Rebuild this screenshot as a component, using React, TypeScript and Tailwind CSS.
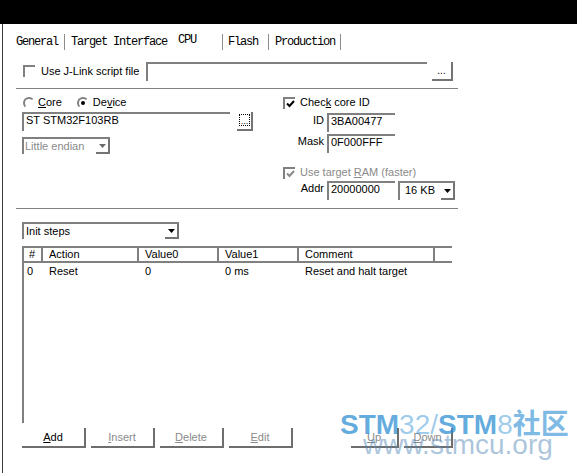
import type { ReactNode } from "react";

// Windows-style classic controls, drawn with plain borders
function CheckBox({ checked, disabled }: { checked?: boolean; disabled?: boolean }) {
  return (
    <span className="w-[12px] h-[12px] shrink-0 border-t-2 border-l-2 border-[#808080] flex items-center justify-center">
      {checked && (
        <svg width="9" height="8" viewBox="0 0 9 8">
          <path
            d="M1 3.5 L3.5 6 L8 1"
            fill="none"
            stroke={disabled ? "#8a8a8a" : "#000"}
            strokeWidth="2"
          />
        </svg>
      )}
    </span>
  );
}

function Radio({ on }: { on?: boolean }) {
  return (
    <span className="w-[12px] h-[12px] shrink-0 rounded-full border-2 border-transparent border-t-[#808080] border-l-[#808080] flex items-center justify-center">
      {on && <span className="w-[4px] h-[4px] rounded-full bg-black" />}
    </span>
  );
}

function DropArrow({ gray }: { gray?: boolean }) {
  return (
    <span className="w-[14px] shrink-0 self-stretch border-r-2 border-b-2 border-[#747474] flex items-center justify-center">
      <svg width="7" height="4" viewBox="0 0 7 4">
        <path d="M0 0H7L3.5 4Z" fill={gray ? "#6a6a6a" : "#000"} />
      </svg>
    </span>
  );
}

function TabSep({ className }: { className: string }) {
  return <span className={`w-[1px] h-[16px] bg-[#8c8c8c] ${className}`} />;
}

function Field({ className, children }: { className: string; children?: ReactNode }) {
  return (
    <div className={`h-[19px] border-t-2 border-l-2 border-[#808080] pl-[2px] leading-[12px] ${className}`}>
      {children}
    </div>
  );
}

function Button({ className, label, disabled }: { className: string; label: string; disabled?: boolean }) {
  return (
    <div
      className={`h-[20px] border-r-2 border-b-2 border-[#6e6e6e] flex items-center justify-center ${
        disabled ? "text-[#8a8a8a]" : "text-black"
      } ${className}`}
    >
      <span>
        <u>{label[0]}</u>
        {label.slice(1)}
      </span>
    </div>
  );
}

export default function App() {
  return (
    <div className="relative w-[577px] h-[473px] overflow-hidden bg-white text-black text-[11px] font-['Liberation_Sans',Arial,sans-serif]">
      <div className="h-[24px] bg-black" />

      <div className="ml-[2px] h-[449px] border-l border-[#3c3c3c] pl-[13px] flex flex-col">
        {/* tab strip */}
        <div className="mt-[9px] h-[17px] flex items-center font-['Liberation_Mono',monospace] text-[12px] tracking-[-1.2px]">
          <span>General</span>
          <TabSep className="ml-[6px]" />
          <span className="ml-[6px]">Target Interface</span>
          <span className="ml-[11px] mb-[3px]">CPU</span>
          <TabSep className="ml-[26px]" />
          <span className="ml-[5px]">Flash</span>
          <TabSep className="ml-[10px]" />
          <span className="ml-[6px]">Production</span>
          <TabSep className="ml-[5px]" />
        </div>

        {/* script file */}
        <div className="mt-[12px] h-[19px] flex items-start">
          <span className="ml-[7px] mt-[3px]">
            <CheckBox />
          </span>
          <span className="ml-[6px] w-[105px] leading-[19px]">Use J-Link script file</span>
          <Field className="w-[281px]" />
          <div className="ml-[5px] w-[21px] h-[19px] border-r-2 border-b-2 border-[#747474] flex items-end justify-center pb-[3px] text-[10px] leading-none">
            ...
          </div>
        </div>

        <div className="mt-[7px] w-[442px] h-[1px] bg-[#808080]" />

        <div className="flex items-start">
          {/* device */}
          <div className="w-[267px] flex flex-col">
            <div className="mt-[7px] h-[13px] flex items-center">
              <span className="ml-[7px]">
                <Radio />
              </span>
              <span className="ml-[3px]">
                <u>C</u>ore
              </span>
              <span className="ml-[15px]">
                <Radio on />
              </span>
              <span className="ml-[4px]">
                De<u>v</u>ice
              </span>
            </div>
            <div className="mt-[3px] h-[19px] flex items-start">
              <Field className="ml-[6px] w-[208px]">ST STM32F103RB</Field>
              <div className="ml-[7px] w-[16px] h-[19px] border-r-2 border-b-2 border-[#747474] p-[2px]">
                <div className="w-[11px] h-[12px] border border-dotted border-black flex items-end justify-center text-[9px] leading-[7px]">
                  ...
                </div>
              </div>
            </div>
            <div className="mt-[6px] ml-[6px] w-[88px] h-[17px] flex border-t-2 border-l-2 border-[#808080]">
              <span className="flex-1 pl-[1px] leading-[14px] text-[#8a8a8a]">Little endian</span>
              <DropArrow gray />
            </div>
          </div>

          {/* core id / target RAM */}
          <div className="flex flex-col">
            <div className="mt-[7px] h-[13px] flex items-center">
              <CheckBox checked />
              <span className="ml-[5px]">
                Chec<u>k</u> core ID
              </span>
            </div>
            <div className="mt-[4px] h-[19px] flex items-start">
              <span className="w-[44px] pr-[3px] pt-[1px] text-right leading-[13px]">ID</span>
              <Field className="w-[68px]">3BA00477</Field>
            </div>
            <div className="mt-[2px] h-[19px] flex items-start">
              <span className="w-[44px] pr-[3px] pt-[1px] text-right leading-[13px]">Mask</span>
              <Field className="w-[68px]">0F000FFF</Field>
            </div>
            <div className="mt-[13px] h-[13px] flex items-center text-[#8a8a8a]">
              <CheckBox checked disabled />
              <span className="ml-[5px]">
                Use target <u>R</u>AM (faster)
              </span>
            </div>
            <div className="mt-[2px] h-[19px] flex items-start">
              <span className="w-[44px] pr-[3px] pt-[1px] text-right leading-[13px]">Addr</span>
              <Field className="w-[68px]">20000000</Field>
              <div className="ml-[3px] w-[57px] h-[19px] flex border-t-2 border-l-2 border-[#808080]">
                <span className="flex-1 pl-[5px] leading-[15px]">16 KB</span>
                <DropArrow />
              </div>
            </div>
          </div>
        </div>

        <div className="mt-[8px] w-[442px] h-[1px] bg-[#808080]" />

        {/* init steps */}
        <div className="mt-[13px] ml-[6px] w-[157px] h-[17px] flex border-t-2 border-l-2 border-[#808080]">
          <span className="flex-1 pl-[2px] leading-[14px]">Init steps</span>
          <DropArrow />
        </div>

        <div className="mt-[7px] ml-[6px] w-[430px] h-[177px] flex flex-col border-t-2 border-l-2 border-[#808080]">
          <div className="h-[15px] flex border-b-2 border-[#808080] leading-[13px]">
            <span className="w-[19px] pl-[5px] border-r-2 border-[#808080]">#</span>
            <span className="w-[96px] pl-[6px] border-r-2 border-[#808080]">Action</span>
            <span className="w-[80px] pl-[6px] border-r-2 border-[#808080]">Value0</span>
            <span className="w-[80px] pl-[6px] border-r-2 border-[#808080]">Value1</span>
            <span className="w-[136px] pl-[6px] border-r-2 border-[#808080]">Comment</span>
            <span className="flex-1" />
          </div>
          <div className="h-[17px] flex leading-[17px]">
            <span className="w-[19px] pl-[3px]">0</span>
            <span className="w-[96px] pl-[6px]">Reset</span>
            <span className="w-[80px] pl-[6px]">0</span>
            <span className="w-[80px] pl-[6px]">0 ms</span>
            <span className="w-[136px] pl-[6px] whitespace-nowrap">Reset and halt target</span>
          </div>
        </div>

        <div className="mt-[5px] flex">
          <Button className="ml-[6px] w-[64px]" label="Add" />
          <Button className="ml-[5px] w-[64px]" label="Insert" disabled />
          <Button className="ml-[5px] w-[64px]" label="Delete" disabled />
          <Button className="ml-[5px] w-[64px]" label="Edit" disabled />
          <Button className="ml-[58px] w-[48px]" label="Up" disabled />
          <Button className="ml-[5px] w-[49px]" label="Down" disabled />
        </div>
      </div>

      {/* forum watermark */}
      <div className="pointer-events-none absolute left-[340px] top-[411px] whitespace-nowrap font-['Liberation_Sans','Noto_Sans_CJK_SC',sans-serif]">
        <div className="h-[28px] text-[28px] leading-[28px]">
          <span className="font-bold text-[rgba(40,140,210,0.73)]">STM</span>
          <span className="text-[rgba(40,140,210,0.45)]">32/</span>
          <span className="font-bold text-[rgba(40,140,210,0.73)]">STM</span>
          <span className="text-[rgba(40,140,210,0.45)]">8</span>
          <span className="font-bold text-[rgba(40,140,210,0.6)]">社区</span>
        </div>
        <div className="ml-[23px] -mt-[8px] text-[28px] leading-[28px] text-[rgba(90,140,185,0.5)]">
          www.stmcu.org
        </div>
      </div>
    </div>
  );
}
